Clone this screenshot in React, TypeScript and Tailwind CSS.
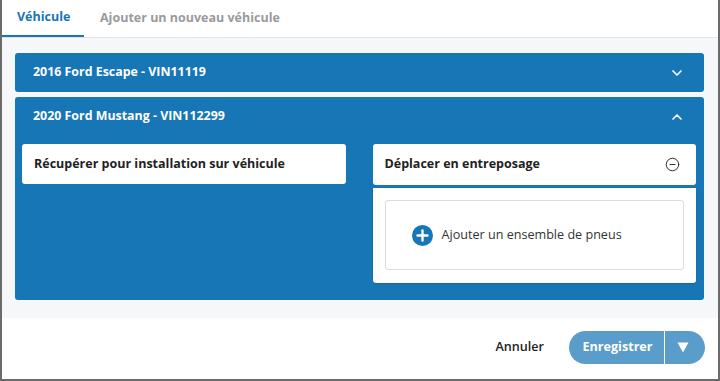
import { ChevronDown, ChevronUp, CircleMinus } from 'lucide-react';

const font = { fontFamily: '"Open Sans", "Liberation Sans", sans-serif' };

function VehicleHeader({ title, open }: { title: string; open: boolean }) {
  return (
    <div className="flex h-[39px] items-center justify-between pl-[18px] pr-[19px]">
      <span className="text-[12.4px] font-bold text-white">{title}</span>
      {open ? (
        <ChevronUp size={16} strokeWidth={2.5} className="text-white" />
      ) : (
        <ChevronDown size={16} strokeWidth={2.5} className="text-white" />
      )}
    </div>
  );
}

export default function App() {
  return (
    <div className="flex h-[381px] w-[720px] flex-col border-x-2 border-b-2 border-[#6b6b6b] bg-white" style={font}>
      {/* tabs */}
      <div className="flex h-[38px] shrink-0 items-end border-b border-[#e1e3e6]">
        <div className="flex h-full w-[82px] items-center border-b-2 border-[#1776b6] pl-[15px] pb-px text-[12.5px] font-bold text-[#1776b6]">
          Véhicule
        </div>
        <div className="flex h-full items-center pl-[16px] text-[12.5px] font-bold text-[#9a9a9a]">
          Ajouter un nouveau véhicule
        </div>
      </div>

      {/* body */}
      <div className="flex h-[280px] shrink-0 flex-col gap-[5px] bg-[#f6f7f9] pl-[13px] pr-[14px] pt-[15px]">
        <div className="rounded-[3px] bg-[#1776b6]">
          <VehicleHeader title="2016 Ford Escape - VIN11119" open={false} />
        </div>

        <div className="rounded-[3px] bg-[#1776b6] pb-[17px]">
          <VehicleHeader title="2020 Ford Mustang - VIN112299" open={true} />
          <div className="mt-[8px] grid grid-cols-2 gap-[27px] pl-[7px] pr-[8px]">
            <div className="self-start">
              <div className="flex h-[40px] items-center rounded-[3px] bg-white px-[12px] text-[12.5px] font-bold text-[#222]">
                Récupérer pour installation sur véhicule
              </div>
            </div>
            <div className="flex flex-col gap-[3px]">
              <div className="flex h-[41px] items-center justify-between rounded-[3px] bg-white pl-[12px] pr-[16px] text-[12.5px] font-bold text-[#222]">
                <span>Déplacer en entreposage</span>
                <CircleMinus size={15} strokeWidth={1.5} className="text-[#222]" />
              </div>
              <div className="rounded-b-[3px] bg-white px-[12px] pb-[13px] pt-[12px] shadow-[0_1px_2px_rgba(0,0,0,0.15)]">
                <div className="flex h-[70px] items-center rounded-[3px] border border-[#dcdcdc] pl-[26px]">
                  <svg width="21" height="21" viewBox="0 0 21 21">
                    <circle cx="10.5" cy="10.5" r="10.5" fill="#1776b6" />
                    <path d="M10.5 5.5v10M5.5 10.5h10" stroke="white" strokeWidth="2.4" strokeLinecap="round" />
                  </svg>
                  <span className="ml-[9px] text-[12.6px] text-[#333]">Ajouter un ensemble de pneus</span>
                </div>
              </div>
            </div>
          </div>
        </div>
      </div>

      {/* footer */}
      <div className="flex flex-1 items-center justify-end gap-[25px] pr-[13px] pb-[3px]">
        <button className="text-[12.6px] font-semibold text-[#222]">Annuler</button>
        <div className="flex h-[33px] overflow-hidden rounded-full bg-[#5a9cca] text-white">
          <button className="flex w-[96px] items-center justify-center border-r border-white pl-[2px] text-[12.6px] font-bold">
            Enregistrer
          </button>
          <button className="flex w-[40px] items-center justify-center pr-[4px]">
            <svg width="12" height="11" viewBox="0 0 12 11">
              <path d="M0.5 0.5h11L6 10.5z" fill="white" />
            </svg>
          </button>
        </div>
      </div>
    </div>
  );
}
